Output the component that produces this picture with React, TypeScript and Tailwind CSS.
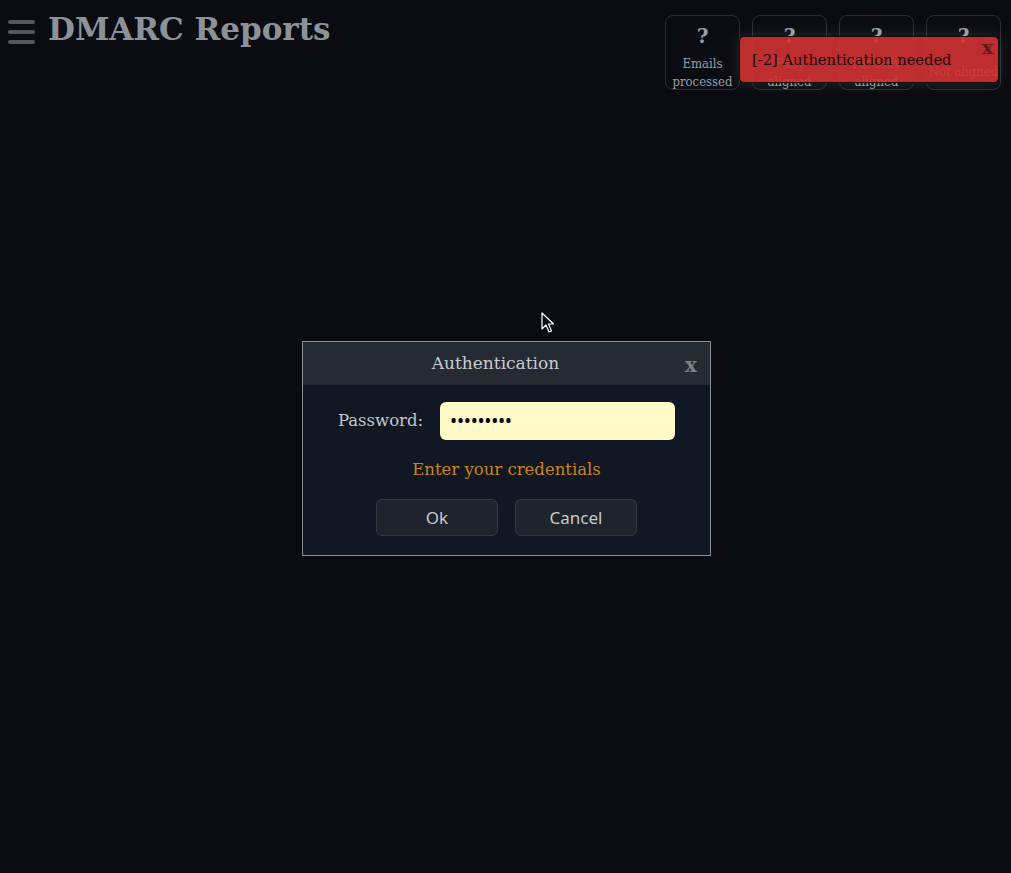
import React from "react";

const serif = { fontFamily: '"DejaVu Serif", "Liberation Serif", serif' };
const condensedSerif = { fontFamily: '"DejaVu Serif Condensed", "DejaVu Serif", serif' };
const sans = { fontFamily: '"Noto Sans", "Open Sans", sans-serif' };

const stats = [
  { label: "Emails processed" },
  { label: "Fully aligned" },
  { label: "Partially aligned" },
  { label: "Not aligned" },
];

function StatCard({ label }: { label: string }) {
  return (
    <div className="flex h-[75px] w-[75px] flex-col rounded-[8px] border border-[#2a2e35] bg-[#0b0d12] text-center">
      <div className="flex h-[39px] shrink-0 items-center justify-center pt-[1px] text-[20px] font-bold text-[#9a9ea5]" style={serif}>
        ?
      </div>
      <div className="flex flex-1 items-center justify-center px-[1px] text-[13px] leading-[18px] text-[#9a9ea5]" style={condensedSerif}>
        {label}
      </div>
    </div>
  );
}

function Cursor() {
  return (
    <svg width="14" height="22" viewBox="0 0 14 22" className="absolute left-[541px] top-[312px]">
      <path
        d="M1 1 L1 17 L5 13 L8 20 L10.5 19 L7.5 12 L12.5 12 Z"
        fill="#0b0d12"
        stroke="#ffffff"
        strokeWidth="1.2"
        strokeLinejoin="round"
      />
    </svg>
  );
}

export default function App() {
  return (
    <div className="relative h-[873px] w-[1011px] overflow-hidden bg-[#0a0c11]">
      {/* top bar */}
      <header className="flex items-start justify-between pl-[8px] pr-[10px] pt-[15px]">
        <div className="flex items-center gap-[13px]">
          <div className="flex w-[27px] flex-col gap-[6px]">
            <span className="h-[4px] rounded-full bg-[#54575c]" />
            <span className="h-[4px] rounded-full bg-[#54575c]" />
            <span className="h-[4px] rounded-full bg-[#54575c]" />
          </div>
          <h1 className="-mt-[6px] text-[31px] font-bold leading-[40px] text-[#8e9298]" style={serif}>
            DMARC Reports
          </h1>
        </div>
        <div className="flex gap-[12px]">
          {stats.map((s) => (
            <StatCard key={s.label} label={s.label} />
          ))}
        </div>
      </header>

      {/* error toast */}
      <div className="absolute right-[12px] top-[36px] flex h-[47px] w-[260px] items-center rounded-[5px] border border-[#1a0a0a] bg-[#d23232]/90 pl-[12px] pt-[2px] shadow-[0_0_14px_rgba(255,255,255,0.12)]">
        <span className="text-[14.7px] text-[#1a0a0a]" style={serif}>
          [-2] Authentication needed
        </span>
        <span className="absolute right-[5px] top-[-4px] text-[19px] font-bold text-[#5a1c1c]" style={serif}>
          x
        </span>
      </div>

      {/* authentication dialog */}
      <div className="absolute left-[302px] top-[341px] w-[409px] border border-[#8a8d92] bg-[#121823]">
        <div className="relative flex h-[43px] items-center justify-center bg-[#262a32] pr-[22px]">
          <span className="text-[17px] text-[#c9ccd1]" style={serif}>
            Authentication
          </span>
          <span className="absolute right-[13px] top-[8px] text-[20px] font-bold text-[#7d8087]" style={serif}>
            x
          </span>
        </div>
        <div className="flex flex-col items-center pb-[19px] pt-[17px]">
          <div className="flex items-center gap-[17px]">
            <label className="text-[16.5px] text-[#c3c6cb]" style={serif}>
              Password:
            </label>
            <div className="flex h-[38px] w-[235px] items-center rounded-[6px] bg-[#fffac8] pl-[10px]">
              <span className="text-[19px] leading-none tracking-[-0.3px] text-black" style={sans}>
                •••••••••
              </span>
            </div>
          </div>
          <div className="mt-[18px] text-[16.5px] text-[#c7861c]" style={serif}>
            Enter your credentials
          </div>
          <div className="mt-[16px] flex gap-[17px]">
            <button
              className="h-[37px] w-[122px] rounded-[6px] border border-[#353941] bg-[#1f232b] pt-[1px] text-[17px] text-[#c6cad0]"
              style={sans}
            >
              Ok
            </button>
            <button
              className="h-[37px] w-[122px] rounded-[6px] border border-[#353941] bg-[#1f232b] pt-[1px] text-[17px] text-[#c6cad0]"
              style={sans}
            >
              Cancel
            </button>
          </div>
        </div>
      </div>

      <Cursor />
    </div>
  );
}
